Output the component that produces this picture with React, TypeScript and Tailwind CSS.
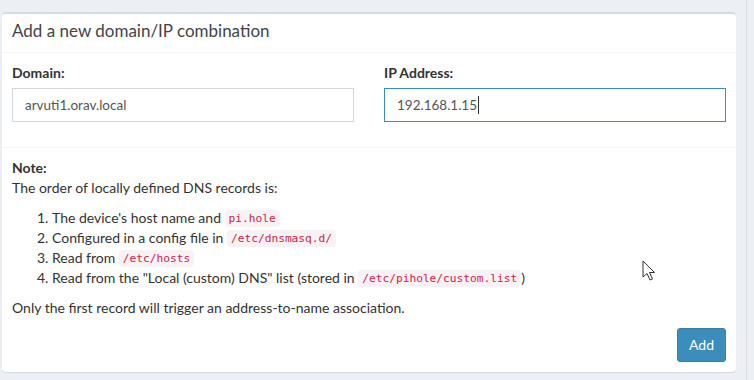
import React from "react";

const FONT = { fontFamily: "Lato, 'Open Sans', sans-serif" };
const MONO = { fontFamily: "'DejaVu Sans Mono', 'Liberation Mono', monospace" };

function Code({ children }: { children: React.ReactNode }) {
  return (
    <code
      style={MONO}
      className="rounded-[4px] bg-[#f9f2f4] px-[4px] py-[2px] align-[1px] text-[11.2px] leading-none text-[#c7254e]"
    >
      {children}
    </code>
  );
}

function Cursor() {
  return (
    <svg
      width="14"
      height="22"
      viewBox="0 0 14 22"
      className="pointer-events-none absolute left-[642px] top-[260px]"
    >
      <path
        d="M1 1 L1 17 L5 13.5 L8 20 L10.5 19 L7.5 12.5 L12.5 12.5 Z"
        fill="#fff"
        stroke="#333"
        strokeWidth="1"
        strokeLinejoin="round"
      />
    </svg>
  );
}

export default function App() {
  return (
    <div
      style={FONT}
      className="relative h-[380px] w-[754px] overflow-hidden bg-[#ecf0f5] pl-[2px] pr-[18px] pt-[12px] text-[14px] leading-[20px] text-[#333]"
    >
      <div className="rounded-[4px] border-t-[2px] border-[#d6dbe2] bg-white shadow-[0_1px_1px_rgba(0,0,0,0.1)]">
        <div className="border-b border-[#f4f4f4] px-[10px] pb-[12px] pt-[8px]">
          <h3 className="text-[17px] leading-[18px] text-[#444]">
            Add a new domain/IP combination
          </h3>
        </div>

        <div className="grid grid-cols-2 gap-[30px] p-[10px] pb-[25px]">
          <div>
            <label className="mb-[5px] block font-bold">Domain:</label>
            <input
              style={FONT}
              readOnly
              value="arvuti1.orav.local"
              className="h-[34px] w-full border border-[#d2d6de] px-[12px] text-[13.5px] text-[#555] outline-none"
            />
          </div>
          <div>
            <label className="mb-[5px] block font-bold">IP Address:</label>
            <div className="flex h-[34px] w-full items-center border border-[#3c8dbc] px-[12px] text-[13.5px] text-[#555]">
              <span>192.168.1.15</span>
              <span className="ml-[1px] h-[18px] w-[1px] bg-[#333]" />
            </div>
          </div>
        </div>

        <div className="border-t border-[#f4f4f4] p-[10px]">
          <p className="font-bold">Note:</p>
          <p>The order of locally defined DNS records is:</p>
          <ol className="mb-[10px] mt-[10px] list-decimal pl-[40px]">
            <li>
              The device's host name and <Code>pi.hole</Code>
            </li>
            <li>
              Configured in a config file in <Code>/etc/dnsmasq.d/</Code>
            </li>
            <li>
              Read from <Code>/etc/hosts</Code>
            </li>
            <li>
              Read from the "Local (custom) DNS" list (stored in{" "}
              <Code>/etc/pihole/custom.list</Code>)
            </li>
          </ol>
          <p className="mb-[10px]">
            Only the first record will trigger an address-to-name association.
          </p>
          <div className="flex justify-end">
            <button className="h-[34px] rounded-[3px] border border-[#367fa9] bg-[#3c8dbc] px-[11px] text-white">
              Add
            </button>
          </div>
        </div>
      </div>

      <div className="absolute right-[7px] top-0 h-full w-[1px] bg-[#dde1e6]" />
      <Cursor />
    </div>
  );
}
